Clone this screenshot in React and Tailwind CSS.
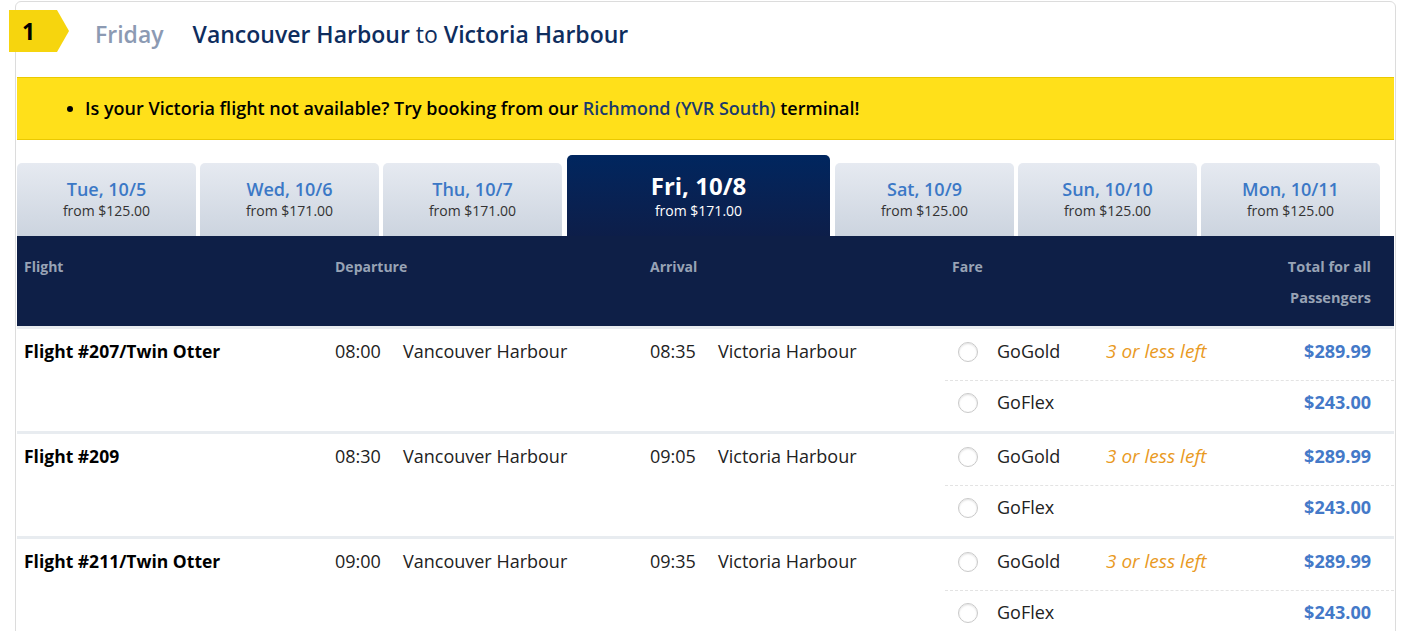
import React from 'react';

const tabs = [
  { day: 'Tue, 10/5', price: '$125.00' },
  { day: 'Wed, 10/6', price: '$171.00' },
  { day: 'Thu, 10/7', price: '$171.00' },
  { day: 'Fri, 10/8', price: '$171.00', active: true },
  { day: 'Sat, 10/9', price: '$125.00' },
  { day: 'Sun, 10/10', price: '$125.00' },
  { day: 'Mon, 10/11', price: '$125.00' },
];

const flights = [
  { name: 'Flight #207/Twin Otter', dep: '08:00', arr: '08:35' },
  { name: 'Flight #209', dep: '08:30', arr: '09:05' },
  { name: 'Flight #211/Twin Otter', dep: '09:00', arr: '09:35' },
];

function Radio() {
  return (
    <span className="ml-[13px] mt-[3px] w-[20px] h-[20px] rounded-full border border-[#c9c9c9] bg-white shadow-[inset_0_1px_2px_rgba(0,0,0,0.12)] shrink-0" />
  );
}

function FareRow({ label, left, price, dashed }) {
  return (
    <div className={`h-[51px] flex items-start ${dashed ? 'pt-[9px] border-t border-dashed border-[#e3e3e3]' : 'pt-[10px]'}`}>
      <Radio />
      <span className="ml-[19px] w-[109px] leading-6">{label}</span>
      <span className="italic text-[19px] text-[#e99a1f] leading-6">{left}</span>
      <span className="ml-auto mr-[23px] font-bold text-[#4479c8] leading-6">{price}</span>
    </div>
  );
}

function FlightRow({ f }) {
  return (
    <div className="grid grid-cols-[311px_315px_302px_1fr] border-b-[3px] border-[#e8ecf0] text-[18px] text-[#222]">
      <div className="pl-[7px] pt-[10px] leading-6 font-bold text-[17.5px] text-black">{f.name}</div>
      <div className="pl-[7px] pt-[10px] leading-6 flex">
        <span className="w-[68px]">{f.dep}</span>
        <span>Vancouver Harbour</span>
      </div>
      <div className="pl-[7px] pt-[10px] leading-6 flex">
        <span className="w-[68px]">{f.arr}</span>
        <span>Victoria Harbour</span>
      </div>
      <div>
        <FareRow label="GoGold" left="3 or less left" price="$289.99" />
        <FareRow label="GoFlex" price="$243.00" dashed />
      </div>
    </div>
  );
}

export default function App() {
  return (
    <div className="relative h-[631px] bg-white pl-[15px] font-['Open_Sans',sans-serif] overflow-hidden">
      {/* badge de l'étape */}
      <div className="absolute left-[9px] top-[10px] w-[60px] h-[42px] bg-[#f6d50e] [clip-path:polygon(0_0,80%_0,100%_50%,80%_100%,0_100%)] flex items-center pl-[13px] text-[23px] font-bold text-black z-10">
        1
      </div>

      <div className="w-[1381px] mt-px border border-[#dcdcdc] rounded-t-md px-px">
        <div className="h-[75px] flex items-center pl-[78px] text-[23px] pb-[11px]">
          <span className="font-semibold text-[#8c9ab3]">Friday</span>
          <span className="ml-[29px] text-[#0e2d5e]">
            <span className="font-semibold">Vancouver Harbour</span> to{' '}
            <span className="font-semibold">Victoria Harbour</span>
          </span>
        </div>

        <div className="h-[63px] bg-[#ffe01a] border-y border-[#eac900] flex items-center text-[18px] font-semibold text-black">
          <span className="ml-[50px] w-[6px] h-[6px] rounded-full bg-black" />
          <span className="ml-[12px]">
            Is your Victoria flight not available? Try booking from our{' '}
            <span className="text-[#1a3a6c]">Richmond (YVR South)</span> terminal!
          </span>
        </div>

        {/* Onglets de dates */}
        <div className="mt-[15px] flex items-end gap-[4px]">
          {tabs.map((t) =>
            t.active ? (
              <div
                key={t.day}
                className="w-[263px] mx-px h-[81px] rounded-t-[5px] bg-gradient-to-b from-[#00265f] to-[#0d1e49] text-white text-center pt-[15px]"
              >
                <div className="text-[24px] font-bold leading-[31px]">{t.day}</div>
                <div className="text-[14px] leading-5">from {t.price}</div>
              </div>
            ) : (
              <div
                key={t.day}
                className="w-[179px] h-[73px] rounded-t-[5px] bg-gradient-to-b from-[#e6eaf1] to-[#ccd4df] text-center pt-[14px]"
              >
                <div className="text-[18px] font-semibold leading-6 text-[#3b78c6]">{t.day}</div>
                <div className="text-[14px] leading-5 text-[#333]">from {t.price}</div>
              </div>
            )
          )}
        </div>

        {/* En-tête du tableau */}
        <div className="h-[93px] bg-[#0e1f47] grid grid-cols-[311px_315px_302px_1fr] text-[14px] font-bold text-[#98a3b5] leading-[31px] pt-[15px] border-b-[3px] border-[#e8ecf0]">
          <div className="pl-[7px]">Flight</div>
          <div className="pl-[7px]">Departure</div>
          <div className="pl-[7px]">Arrival</div>
          <div className="flex pl-[7px] pr-[23px]">
            <span>Fare</span>
            <span className="ml-auto text-right text-[14.5px]">
              Total for all
              <br />
              Passengers
            </span>
          </div>
        </div>

        {flights.map((f) => (
          <FlightRow key={f.name} f={f} />
        ))}
      </div>
    </div>
  );
}
